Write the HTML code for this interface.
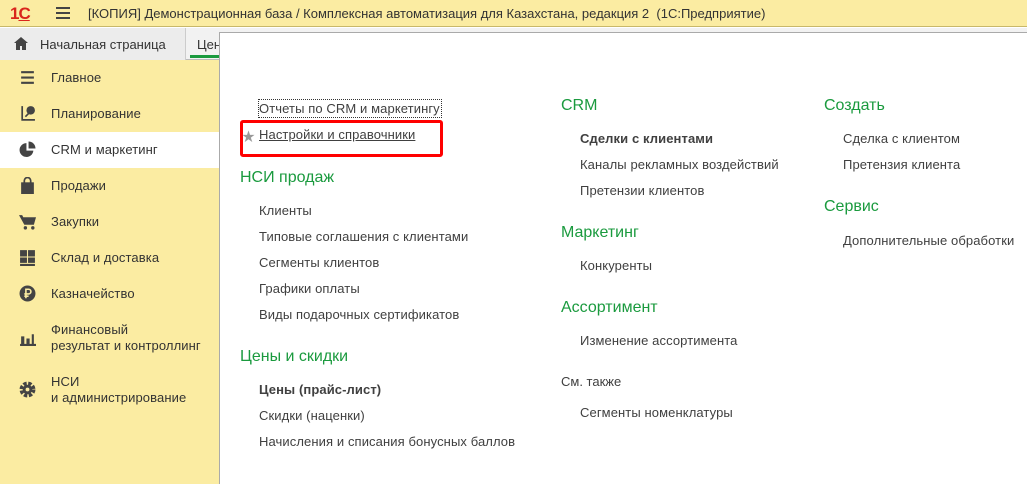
<!DOCTYPE html>
<html><head><meta charset="utf-8"><style>
*{margin:0;padding:0;box-sizing:border-box}
body{width:1027px;height:484px;overflow:hidden;background:#fff;font-family:"Liberation Sans","Noto Sans CJK SC",sans-serif;color:#333;position:relative}
.a{position:absolute;white-space:nowrap}
.t{font-size:13px;line-height:16px;color:#404040;letter-spacing:0.1px}
.h{font-size:16px;line-height:20px;color:#1a9a3e}
.s{font-size:13px;line-height:16px;color:#404040}
.ic{position:absolute;left:19px;width:17px;height:17px}
</style></head><body>
<div class="a" style="left:0;top:0;width:1027px;height:27px;background:#fbeca2;border-bottom:1px solid #c8b86a"></div>
<div class="a" style="left:10px;top:4px;font-size:17px;font-weight:bold;color:#d9261c;letter-spacing:-1px">1<span style="text-decoration:underline">С</span></div>
<div class="a" style="left:56px;top:7px;width:14px;height:12px;border-top:2px solid #444;border-bottom:2px solid #444"><div style="margin-top:3px;height:2px;background:#444"></div></div>
<div class="a" style="left:88px;top:6px;font-size:13px;color:#333">[КОПИЯ] Демонстрационная база / Комплексная автоматизация для Казахстана, редакция 2 &nbsp;(1С:Предприятие)</div>
<div class="a" style="left:0;top:28px;width:1027px;height:32px;background:#f2f2f2;border-bottom:1px solid #bbb"></div>
<div class="a" style="left:0;top:28px;width:186px;height:32px;background:#ececec;border-right:1px solid #ccc"></div>
<svg class="a" style="left:14px;top:37px" width="14" height="13" viewBox="0 0 14 13"><path d="M7 0L0 6h2v7h4V9h2v4h4V6h2z" fill="#444"/></svg>
<div class="a" style="left:40px;top:37px;font-size:13px;color:#333">Начальная страница</div>
<div class="a" style="left:197px;top:37px;font-size:13px;color:#333">Цен</div>
<div class="a" style="left:190px;top:55px;width:30px;height:3px;background:#1a9a3e"></div>
<div class="a" style="left:0;top:60px;width:220px;height:424px;background:#fbeca2;border-right:1px solid #bbb"></div>
<div class="a" style="left:0;top:132px;width:220px;height:36px;background:#fff"></div>
<div class="a" style="left:219px;top:32px;width:808px;height:452px;background:#fff;border-left:1px solid #aaa;border-top:1px solid #aaa"></div>

<!-- sidebar -->
<svg class="ic" style="top:69px" viewBox="0 0 16 16"><path d="M2 2h12v2H2zM2 7h12v2H2zM2 12h12v2H2z" fill="#444"/></svg>
<div class="a t" style="left:51px;top:70px;color:#333">Главное</div>
<svg class="ic" style="top:105px" viewBox="0 0 16 16"><path d="M3 1v13h12" stroke="#444" stroke-width="1.6" fill="none"/><circle cx="11" cy="5" r="4" fill="#444"/><path d="M6 11l3-3" stroke="#444" stroke-width="1.5"/></svg>
<div class="a t" style="left:51px;top:106px;color:#333">Планирование</div>
<svg class="ic" style="top:141px" viewBox="0 0 16 16"><path d="M7 2a6.5 6.5 0 1 0 6.5 7H7z" fill="#444"/><path d="M9 0.5v6.5h6.5a6.5 6.5 0 0 0-6.5-6.5z" fill="#444"/></svg>
<div class="a t" style="left:51px;top:142px;color:#333">CRM и маркетинг</div>
<svg class="ic" style="top:177px" viewBox="0 0 16 16"><path d="M2 5h12v11H2z" fill="#444"/><path d="M5 6V3.5a3 3 0 0 1 6 0V6" stroke="#444" stroke-width="1.6" fill="none"/></svg>
<div class="a t" style="left:51px;top:178px;color:#333">Продажи</div>
<svg class="ic" style="top:213px" viewBox="0 0 16 16"><path d="M0 2h3l1 2h12l-2 7H5z" fill="#444"/><circle cx="6" cy="14" r="1.6" fill="#444"/><circle cx="13" cy="14" r="1.6" fill="#444"/></svg>
<div class="a t" style="left:51px;top:214px;color:#333">Закупки</div>
<svg class="ic" style="top:249px" viewBox="0 0 16 16"><path d="M1 1h6.5v6H1zM8.5 1H15v6H8.5zM1 8h6.5v5H1zM8.5 8H15v5H8.5zM1 14h14v2H1z" fill="#444"/></svg>
<div class="a t" style="left:51px;top:250px;color:#333">Склад и доставка</div>
<svg class="ic" style="top:285px" viewBox="0 0 16 16"><circle cx="8" cy="8" r="7.5" fill="#444"/><path d="M6.5 12.5V4h2.5a2.2 2.2 0 0 1 0 4.4H5M5 10.5h4" stroke="#fbeca2" stroke-width="1.5" fill="none"/></svg>
<div class="a t" style="left:51px;top:286px;color:#333">Казначейство</div>
<svg class="ic" style="top:330px" viewBox="0 0 16 16"><path d="M1 13h15v2H1zM2 6h3v7H2zM7 8h3v5H7zM12 4h2v9h-2z" fill="#444"/></svg>
<div class="a t" style="left:51px;top:322px;color:#333">Финансовый<br>результат и контроллинг</div>
<svg class="ic" style="top:381px" viewBox="0 0 16 16"><circle cx="8" cy="8" r="5.5" fill="none" stroke="#444" stroke-width="4" stroke-dasharray="3 1.4"/><circle cx="8" cy="8" r="4.5" fill="#444"/><circle cx="8" cy="8" r="1.8" fill="#fbeca2"/></svg>
<div class="a t" style="left:51px;top:374px;color:#333">НСИ<br>и администрирование</div>

<!-- column 1 -->
<div class="a" style="left:258px;top:99px;width:184px;height:19px;border:1px dotted #333"></div>
<div class="a t" style="left:259px;top:101px">Отчеты по CRM и маркетингу</div>
<div class="a" style="left:240px;top:120px;width:203px;height:37px;border:3px solid #f00;border-radius:3px"></div>
<div class="a" style="left:242px;top:126px;font-size:13px;color:#999">★</div>
<div class="a t" style="left:259px;top:127px;text-decoration:underline">Настройки и справочники</div>
<div class="a h" style="left:240px;top:168px">НСИ продаж</div>
<div class="a t" style="left:259px;top:203px">Клиенты</div>
<div class="a t" style="left:259px;top:229px">Типовые соглашения с клиентами</div>
<div class="a t" style="left:259px;top:255px">Сегменты клиентов</div>
<div class="a t" style="left:259px;top:281px">Графики оплаты</div>
<div class="a t" style="left:259px;top:307px">Виды подарочных сертификатов</div>
<div class="a h" style="left:240px;top:347px">Цены и скидки</div>
<div class="a t" style="left:259px;top:382px;font-weight:bold">Цены (прайс-лист)</div>
<div class="a t" style="left:259px;top:408px">Скидки (наценки)</div>
<div class="a t" style="left:259px;top:434px">Начисления и списания бонусных баллов</div>

<!-- column 2 -->
<div class="a h" style="left:561px;top:96px">CRM</div>
<div class="a t" style="left:580px;top:131px;font-weight:bold">Сделки с клиентами</div>
<div class="a t" style="left:580px;top:157px">Каналы рекламных воздействий</div>
<div class="a t" style="left:580px;top:183px">Претензии клиентов</div>
<div class="a h" style="left:561px;top:223px">Маркетинг</div>
<div class="a t" style="left:580px;top:258px">Конкуренты</div>
<div class="a h" style="left:561px;top:298px">Ассортимент</div>
<div class="a t" style="left:580px;top:333px">Изменение ассортимента</div>
<div class="a s" style="left:561px;top:374px">См. также</div>
<div class="a t" style="left:580px;top:405px">Сегменты номенклатуры</div>

<!-- column 3 -->
<div class="a h" style="left:824px;top:96px">Создать</div>
<div class="a t" style="left:843px;top:131px">Сделка с клиентом</div>
<div class="a t" style="left:843px;top:157px">Претензия клиента</div>
<div class="a h" style="left:824px;top:197px">Сервис</div>
<div class="a t" style="left:843px;top:233px">Дополнительные обработки</div>
</body></html>
